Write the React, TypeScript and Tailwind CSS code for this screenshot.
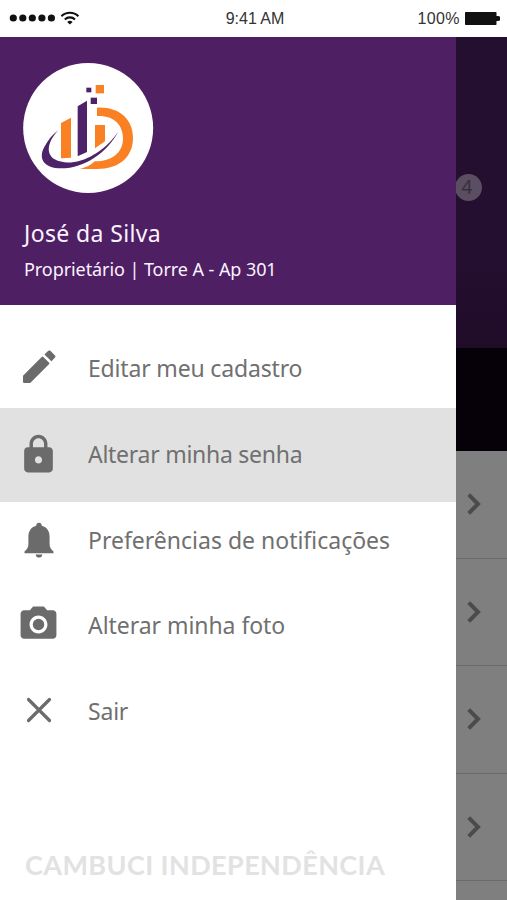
import type { ReactNode } from 'react';
import { MdLock, MdPhotoCamera } from 'react-icons/md';

function StatusBar() {
  return (
    <header className="grid h-[37px] shrink-0 grid-cols-3 items-center bg-white font-['Liberation_Sans',sans-serif] text-base leading-none text-[#333]">
      <svg className="h-[37px] w-[90px]" viewBox="0 0 90 37" fill="#111">
        {[13.3, 22.8, 32.3, 41.9, 51.4].map((x) => (
          <circle key={x} cx={x} cy="18" r="3.6" />
        ))}
        <g fill="none" stroke="#111" strokeWidth="2.1">
          <path d="M61.4 16.2a12.2 12.2 0 0 1 17 0" />
          <path d="M64.8 19.4a7.4 7.4 0 0 1 10.2 0" />
        </g>
        <path d="M67.2 21.9a4 4 0 0 1 5.4 0L69.9 24.6z" />
      </svg>
      <span className="pl-[3px] text-center">9:41 AM</span>
      <div className="flex items-center justify-end gap-[5px] pr-[7px]">
        <span className="tracking-[0.4px]">100%</span>
        <svg className="h-[13px] w-[35px]" viewBox="0 0 35 13" fill="#111">
          <rect width="31.5" height="13" rx="0.8" />
          <path d="M31 4h2a2.5 2.5 0 0 1 0 5h-2z" />
        </svg>
      </div>
    </header>
  );
}

function Logo() {
  return (
    <svg className="h-[145px] w-[155px]" viewBox="0 0 465 435">
      <circle cx="234.5" cy="219" r="195" fill="#fff" />
      <g fill="#fa8123">
        <path d="M257 90h25v25h-25z" />
        <path d="M153 204l30-16v120l-30 2z" />
        <path d="M255 210h30v49l-30 21z" />
        <path d="M261 158c66-3 108 34 108 91 0 57-42 93-108 93h-52c24-6 36-14 45-23 48 1 85-23 85-69 0-43-31-70-78-67z" />
      </g>
      <g fill="#4e2268">
        <path d="M229 98h15v14h-15z" />
        <path d="M242 128h19v19h-19z" />
        <path d="M203 154l28-17v154l-28 13z" />
        <path d="M146 225c-32 32-41 70-12 88 49 27 137-5 191-83-34 62-101 110-171 110-51 0-71-28-51-64 10-20 25-38 43-51z" />
      </g>
    </svg>
  );
}

function PencilIcon() {
  return (
    <svg className="-mt-1 h-[34px] w-[34px]" viewBox="0 0 34 34" fill="#6b6b6b" stroke="#6b6b6b" strokeWidth="1.6" strokeLinejoin="round">
      <path d="M1.800 26L20.500 7.300L26.600 13.400L7.900 32.100H1.800z" />
      <path d="M23.500 4.500L26.800 1.400Q27.300 1 27.800 1.400L32.400 6Q32.800 6.500 32.400 7L29.400 10.300z" />
    </svg>
  );
}

function BellIcon() {
  return (
    <svg className="h-[36px] w-[30px]" viewBox="0 0 30 36" fill="#6b6b6b">
      <path d="M15 0.700c1.700 0 2.700 1.200 2.800 3 5.200 1.400 7.800 5.400 7.800 11v6.800c0 3.800 1.100 5.500 3.900 8v1.700H0.500v-1.700c2.800-2.500 3.900-4.200 3.900-8v-6.800c0-5.600 2.600-9.600 7.800-11 .1-1.800 1.100-3 2.800-3z" />
      <path d="M11.700 32.400h6.600c0 1.900-1.400 3.200-3.300 3.200s-3.300-1.300-3.300-3.200z" />
    </svg>
  );
}

function CrossIcon() {
  return (
    <svg className="-mt-0.5 h-[26px] w-[26px]" viewBox="0 0 26 26" fill="none" stroke="#6b6b6b" strokeWidth="3.2" strokeLinecap="round">
      <path d="M2.500 2.500l21 21M23.500 2.500l-21 21" />
    </svg>
  );
}

function MenuItem({ icon, label, tracking, active = false }: { icon: ReactNode; label: string; tracking: string; active?: boolean }) {
  return (
    <li className={active ? '-my-1 flex h-[94px] items-center bg-[#e1e1e1]' : 'flex h-[85.5px] items-center'}>
      <span className="flex w-[77px] shrink-0 justify-center text-[#6b6b6b]">{icon}</span>
      <span className={`pl-[11px] text-[23px] leading-none whitespace-nowrap text-[#707070] ${tracking}`}>{label}</span>
    </li>
  );
}

function Drawer() {
  return (
    <aside className="z-10 flex w-[456px] shrink-0 flex-col bg-white font-['Noto_Sans',sans-serif]">
      <div className="h-[268px] bg-[#4e2063] text-[#fbf3ff]">
        <div className="pt-[18px] pl-[10px]">
          <Logo />
        </div>
        <h1 className="mt-[20px] pl-6 text-[23px] leading-[26px] tracking-[0.37px] whitespace-nowrap">José da Silva</h1>
        <p className="mt-[11px] pl-6 text-[18px] leading-[24px] tracking-[-0.07px] whitespace-nowrap">Proprietário | Torre A - Ap 301</p>
      </div>
      <ul className="pt-[21px]">
        <MenuItem icon={<PencilIcon />} label="Editar meu cadastro" tracking="tracking-[-0.17px]" />
        <MenuItem icon={<MdLock size={43} />} label="Alterar minha senha" tracking="tracking-[-0.27px]" active />
        <MenuItem icon={<BellIcon />} label="Preferências de notificações" tracking="tracking-[0px]" />
        <MenuItem icon={<MdPhotoCamera size={43} className="-mt-0.5" />} label="Alterar minha foto" tracking="tracking-[-0.05px]" />
        <MenuItem icon={<CrossIcon />} label="Sair" tracking="tracking-[-0.2px]" />
      </ul>
      <div className="mt-auto pb-[20px] pl-[25px] font-['Lato',sans-serif] text-[27px] leading-[30px] font-bold tracking-[0.4px] whitespace-nowrap text-[#e2e2e2]">
        CAMBUCI INDEPENDÊNCIA
      </div>
    </aside>
  );
}

function DimmedPage() {
  return (
    <main className="flex min-w-0 flex-1 flex-col bg-[#7f7f7f]">
      <div className="h-[311px] shrink-0 bg-linear-to-b from-[#250f30] from-70% to-[#200b29] pt-[137px]">
        <span className="-ml-[1.5px] flex size-[27px] items-center justify-center rounded-full bg-[#5b4d62] pr-[2px] font-['Noto_Sans',sans-serif] text-[19px] leading-none text-[#36303a]">
          4
        </span>
      </div>
      <div className="h-[103px] shrink-0 bg-[#060108]" />
      {[0, 1, 2, 3].map((row) => (
        <div key={row} className="flex h-[107.5px] shrink-0 items-center border-b border-[#6b6b6b] pl-[11px]">
          <svg className="h-[22px] w-[14px]" viewBox="0 0 14 22" fill="none" stroke="#4b4b4b" strokeWidth="4">
            <path d="M1.700 1.700L11 11L1.700 20.300" />
          </svg>
        </div>
      ))}
    </main>
  );
}

export default function App() {
  return (
    <div className="flex h-[900px] w-[507px] flex-col overflow-hidden bg-white">
      <StatusBar />
      <div className="flex min-h-0 flex-1">
        <Drawer />
        <DimmedPage />
      </div>
    </div>
  );
}
